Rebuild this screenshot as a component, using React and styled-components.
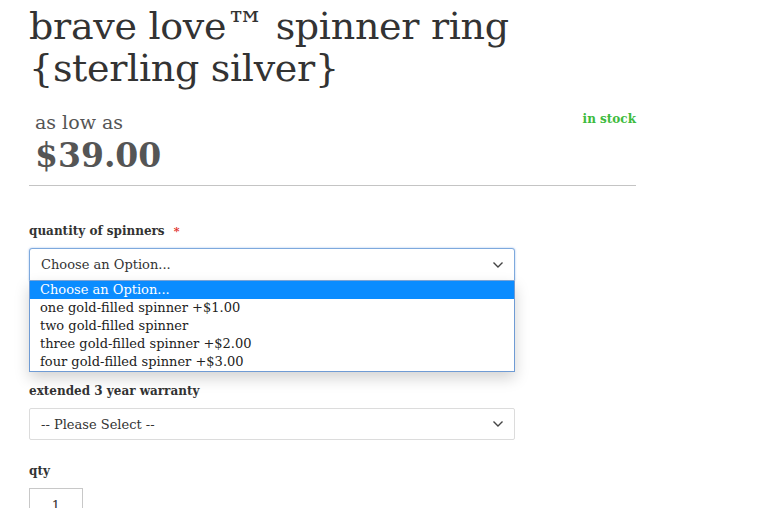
import React from 'react';
import styled, { createGlobalStyle } from 'styled-components';

const GlobalStyle = createGlobalStyle`
  html, body {
    margin: 0;
    background: #ffffff;
  }
  body {
    font-family: 'DejaVu Serif', serif;
    color: #333;
    overflow: hidden;
  }
`;

const Page = styled.div`
  width: 607px;
  padding: 5px 0 0 29px;
`;

const Title = styled.h1`
  margin: 0;
  font-size: 38px;
  font-weight: normal;
  line-height: 42px;
  color: #333;
  letter-spacing: -0.3px;
`;

const PriceBox = styled.div`
  display: flex;
  justify-content: space-between;
  align-items: flex-start;
  margin-top: 19px;
  padding: 0 0 9px 6px;
  border-bottom: 1px solid #c4c4c4;
`;

const Prices = styled.div`
  display: flex;
  flex-direction: column;
`;

const AsLow = styled.span`
  font-size: 19px;
  color: #555;
  line-height: 28px;
`;

const Price = styled.span`
  font-size: 33px;
  font-weight: bold;
  color: #555;
  line-height: 40px;
`;

const Stock = styled.span`
  font-size: 12px;
  font-weight: bold;
  color: #3dbb3d;
  margin-top: 4px;
`;

const Field = styled.div`
  margin-top: ${(p) => p.top}px;
  width: 486px;
`;

const Label = styled.div`
  font-size: 12px;
  font-weight: bold;
  color: #333;
  line-height: 16px;
  margin-bottom: ${(p) => p.gap || 9}px;
`;

const Required = styled.span`
  color: #e02b27;
  margin-left: 9px;
  font-size: 11px;
`;

const SelectWrap = styled.div`
  position: relative;
`;

const SelectBox = styled.div`
  height: ${(p) => (p.open ? 33 : 32)}px;
  box-sizing: border-box;
  display: flex;
  align-items: center;
  justify-content: space-between;
  padding: 0 10px 0 11px;
  border: 1px solid ${(p) => (p.open ? '#7ea9dd' : '#dcdcdc')};
  border-radius: ${(p) => (p.open ? '3px 3px 0 0' : '2px')};
  box-shadow: ${(p) => (p.open ? '0 0 2px rgba(80,140,220,0.6)' : 'none')};
  font-size: 13px;
  color: #333;
  background: #fff;
`;

const Chevron = () => (
  <svg width="12" height="8" viewBox="0 0 12 8">
    <path d="M1.5 1.5 L6 6 L10.5 1.5" fill="none" stroke="#444" strokeWidth="1.4" />
  </svg>
);

const Menu = styled.div`
  position: absolute;
  left: 0;
  top: 100%;
  width: 486px;
  box-sizing: border-box;
  border: 1px solid #6f9bd4;
  border-top: none;
  background: #fff;
  box-shadow: 0 6px 14px rgba(0, 0, 0, 0.18);
  z-index: 2;
`;

const MenuItem = styled.div`
  height: 18px;
  line-height: 18px;
  padding-left: 10px;
  font-size: 13px;
  color: ${(p) => (p.active ? '#fff' : '#222')};
  background: ${(p) => (p.active ? '#0b8cff' : 'transparent')};
`;

const QtyInput = styled.div`
  width: 54px;
  height: 30px;
  box-sizing: border-box;
  border: 1px solid #c8c8c8;
  text-align: center;
  font-size: 13px;
  line-height: 34px;
  color: #333;
`;

const options = [
  'Choose an Option...',
  'one gold-filled spinner +$1.00',
  'two gold-filled spinner',
  'three gold-filled spinner +$2.00',
  'four gold-filled spinner +$3.00',
];

export default function App() {
  return (
    <>
      <GlobalStyle />
      <Page>
        <Title>
          brave love™ spinner ring
          <br />
          {'{sterling silver}'}
        </Title>
        <PriceBox>
          <Prices>
            <AsLow>as low as</AsLow>
            <Price>$39.00</Price>
          </Prices>
          <Stock>in stock</Stock>
        </PriceBox>

        <Field top={37}>
          <Label gap={8}>
            quantity of spinners<Required>*</Required>
          </Label>
          <SelectWrap>
            <SelectBox open>
              Choose an Option...
              <Chevron />
            </SelectBox>
            <Menu>
              {options.map((o, i) => (
                <MenuItem key={o} active={i === 0}>
                  {o}
                </MenuItem>
              ))}
            </Menu>
          </SelectWrap>
        </Field>

        <Field top={102}>
          <Label>extended 3 year warranty</Label>
          <SelectBox>
            -- Please Select --
            <Chevron />
          </SelectBox>
        </Field>

        <Field top={23}>
          <Label>qty</Label>
          <QtyInput>1</QtyInput>
        </Field>
      </Page>
    </>
  );
}
